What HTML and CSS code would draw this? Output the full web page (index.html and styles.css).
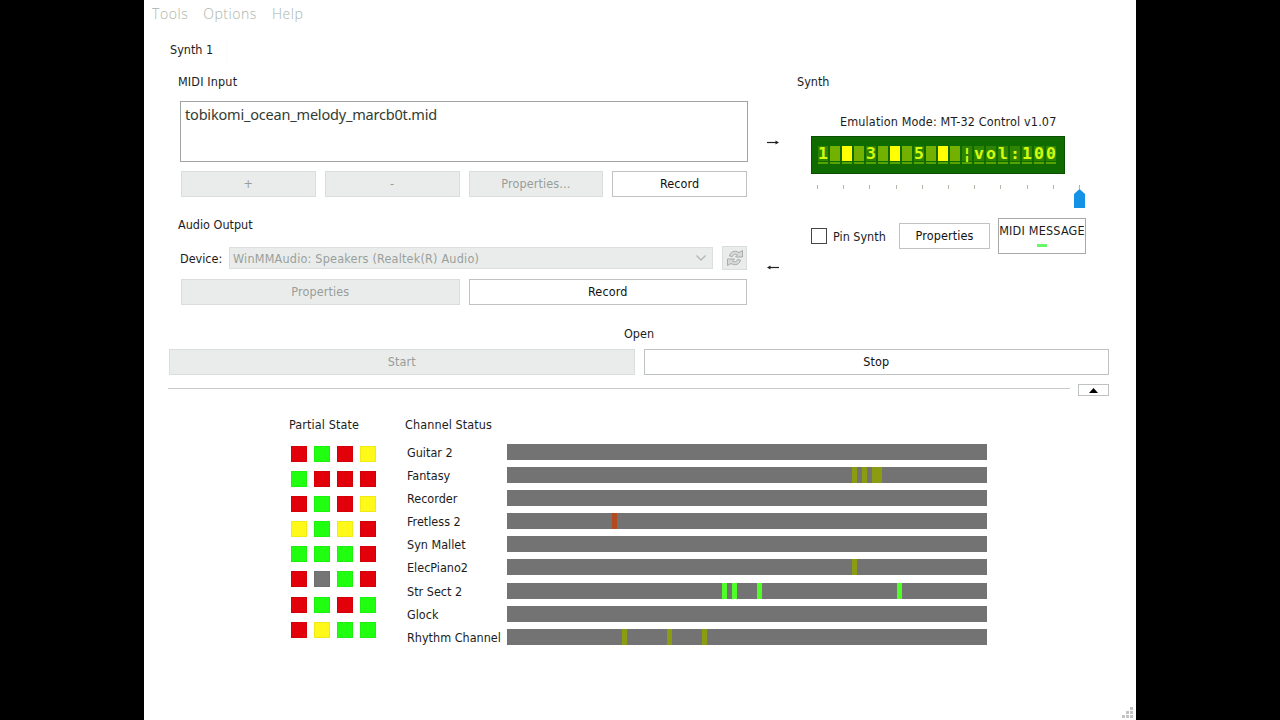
FILE: index.html
```html
<!DOCTYPE html>
<html lang="en">
<head>
  <meta charset="UTF-8" />
  <meta name="viewport" content="width=device-width, initial-scale=1.0"/>
  <title>MT-32 Synth</title>
  <link rel="stylesheet" href="styles.css">
</head>
<body>
  <div class="window">
    <div class="menubar">
      <span class="menu-tools">Tools</span>
      <span class="menu-options">Options</span>
      <span class="menu-help">Help</span>
    </div>
    <div class="tab"><span>Synth 1</span></div>

    <div class="top">
      <div class="left">
        <h2 class="midi-title">MIDI Input</h2>
        <div class="list">tobikomi_ocean_melody_marcb0t.mid</div>
        <div class="row midi-buttons">
          <button disabled>+</button>
          <button disabled>-</button>
          <button disabled>Properties...</button>
          <button>Record</button>
        </div>
        <h2 class="audio-title">Audio Output</h2>
        <div class="row device">
          <label>Device:</label>
          <div class="select">
            <span>WinMMAudio: Speakers (Realtek(R) Audio)</span>
            <svg width="10" height="6" viewBox="0 0 10 6"><path d="M0.5 0.5L5 5L9.5 0.5" fill="none" stroke="#b3b8b3" stroke-width="1.3"/></svg>
          </div>
          <button class="refresh" disabled>
            <svg width="18" height="18" viewBox="0 0 18 18" fill="#d6d9d6" stroke="#a9ada9" stroke-width="1">
              <path d="M3.500 7C4 3 8.500 0.800 13 3.500L16.500 1.500V8H9.500L11.500 6C9 4.500 7 5.500 6.500 7.500Z"/>
              <path d="M14.500 11C14 15 9.500 17.200 5 14.500L1.500 16.500V10H8.500L6.500 12C9 13.500 11 12.500 11.500 10.500Z"/>
            </svg>
          </button>
        </div>
        <div class="row audio-buttons">
          <button disabled>Properties</button>
          <button>Record</button>
        </div>
      </div>

      <div class="arrows">
        <svg width="12" height="7" viewBox="0 0 12 7"><path d="M0 3.500H9" stroke="#222" stroke-width="1.200"/><path d="M8.500 1.500L12 3.500L8.500 5.500Z" fill="#222"/></svg>
        <svg width="12" height="7" viewBox="0 0 12 7"><path d="M3 3.500H12" stroke="#222" stroke-width="1.200"/><path d="M3.500 1.500L0 3.500L3.500 5.500Z" fill="#222"/></svg>
      </div>

      <div class="right">
        <h2 class="synth-title">Synth</h2>
        <p class="mode">Emulation Mode: MT-32 Control v1.07</p>
        <div class="lcd" id="lcd"></div>
        <div class="slider">
          <div class="ticks"><i></i><i></i><i></i><i></i><i></i><i></i><i></i><i></i><i></i><i></i><i></i></div>
          <svg class="thumb" width="11" height="19" viewBox="0 0 11 19"><path d="M0 5L5.500 0L11 5V19H0Z" fill="#1492e6"/></svg>
        </div>
        <div class="synth-controls">
          <span class="checkbox"></span>
          <span class="pin">Pin Synth</span>
          <button class="props">Properties</button>
          <div class="message"><span>MIDI MESSAGE</span><i></i></div>
        </div>
      </div>
    </div>

    <p class="status">Open</p>
    <div class="row run-buttons">
      <button disabled>Start</button>
      <button>Stop</button>
    </div>
    <div class="divider">
      <hr>
      <button><svg width="9" height="5" viewBox="0 0 9 5"><path d="M4.500 0L9 5H0Z"/></svg></button>
    </div>

    <div class="monitor">
      <div class="partials">
        <h2>Partial State</h2>
        <div class="leds" id="leds"></div>
      </div>
      <div class="channels">
        <h2>Channel Status</h2>
        <div id="channels"></div>
      </div>
    </div>
    <svg class="grip" width="11" height="11" viewBox="0 0 11 11" fill="#c4c4c4"><path d="M8 0h3v3h-3zM4 4h3v3h-3zM8 4h3v3h-3zM0 8h3v3h-3zM4 8h3v3h-3zM8 8h3v3h-3z"/></svg>
  </div>

  <script>
    // # is a lit block, a space is an idle one
    const lcd = document.getElementById("lcd");
    for (const c of "1 # 3 # 5 # |vol:100") {
      const cell = document.createElement("span");
      cell.className = c === "#" ? "lit" : c === " " ? "idle" : "char";
      if (cell.className === "char") cell.textContent = c === "|" ? "¦" : c;
      lcd.appendChild(cell);
    }

    const leds = document.getElementById("leds");
    for (const c of "rgrygrrrrgryygyrgggrrxgrrgrgrygg") {
      const led = document.createElement("i");
      led.className = "led " + c;
      leds.appendChild(led);
    }

    // notes: [left, width, colour]
    const channels = [
      ["Guitar 2", []],
      ["Fantasy", [[345, 5, "olive"], [355, 5, "olive"], [365, 10, "olive"]]],
      ["Recorder", []],
      ["Fretless 2", [[105, 5, "rust"]]],
      ["Syn Mallet", []],
      ["ElecPiano2", [[345, 5, "olive"]]],
      ["Str Sect 2", [[215, 5, "lime"], [225, 5, "lime"], [250, 5, "lime"], [390, 5, "lime"]]],
      ["Glock", []],
      ["Rhythm Channel", [[115, 5, "olive"], [160, 5, "olive"], [195, 5, "olive"]]]
    ];
    document.getElementById("channels").innerHTML = channels.map(([name, notes]) =>
      `<div class="channel"><span>${name}</span><div class="bar">${notes.map(([x, w, c]) =>
        `<i class="${c}" style="left:${x}px;width:${w}px"></i>`).join("")}</div></div>`).join("");
  </script>
</body>
</html>
```
FILE: styles.css
```css
* {
  box-sizing: border-box;
}

body {
  margin: 0;
  height: 720px;
  background: #000;
  overflow: hidden;
  font-family: "DejaVu Sans Condensed", "DejaVu Sans", sans-serif;
  font-stretch: condensed;
  font-size: 12.5px;
  color: #1c1c1c;
}

h2, p {
  margin: 0;
  font-size: inherit;
  font-weight: normal;
  line-height: 16px;
  white-space: nowrap;
}

.window {
  position: relative;
  width: 992px;
  height: 720px;
  margin: 0 auto;
  background: #fefffe;
}

.menubar {
  display: flex;
  gap: 15px;
  height: 38px;
  padding: 4px 8px;
  font: 300 14px/20px "Open Sans", sans-serif;
  letter-spacing: 0.55px;
  color: #aab4aa;
}

.tab {
  width: 83px;
  height: 26px;
  padding: 4px 0 0 26px;
  line-height: 16px;
  border-right: 1px solid #fafcf9;
}

.top {
  display: flex;
  height: 262px;
  padding-left: 34px;
}

.left {
  width: 569px;
  padding-top: 10px;
}

.midi-title {
  letter-spacing: 0.15px;
}

.list {
  width: 568px;
  height: 61px;
  margin: 11px 0 9px 2px;
  padding: 2px 4px;
  border: 1px solid #a0a4a0;
  font: 14.5px/20px "Noto Sans", sans-serif;
  letter-spacing: -0.19px;
  color: #333c33;
}

.row {
  display: flex;
  gap: 9px;
}

button {
  flex: 1;
  height: 26px;
  padding: 0 0 1px;
  border: 1px solid #bfc3bf;
  background: #fff;
  font: inherit;
  letter-spacing: 0.12px;
  color: #111;
}

button:disabled {
  background: #e9eceb;
  border-color: #d9dddb;
  color: #989d99;
}

.midi-buttons, .audio-buttons {
  width: 566px;
  margin-left: 3px;
}

.audio-title {
  margin: 20px 0 13px;
}

.device {
  align-items: center;
  width: 567px;
  margin: 0 0 9px 2px;
}

.device label {
  width: 40px;
}

.select {
  display: flex;
  flex: 1;
  align-items: center;
  justify-content: space-between;
  height: 22px;
  padding: 0 6px 0 3px;
  background: #e9eceb;
  border: 1px solid #dcdfdd;
  color: #9a9f9b;
  letter-spacing: 0.21px;
}

.device .refresh {
  display: flex;
  flex: none;
  align-items: center;
  justify-content: center;
  width: 25px;
  height: 24px;
}

.arrows {
  display: flex;
  flex-direction: column;
  gap: 118px;
  width: 50px;
  padding: 75px 0 0 20px;
}

.right {
  width: 300px;
  padding-top: 10px;
}

.mode {
  margin: 24px 0 6px 43px;
  letter-spacing: 0.14px;
}

.lcd {
  display: flex;
  gap: 2px;
  width: 254px;
  height: 38px;
  margin-left: 14px;
  padding: 9px 6px;
  background: #0f6a00;
  border: 1px solid #084f00;
}

.lcd span {
  position: relative;
  width: 10px;
  height: 15px;
  background: #2f8500;
  color: #d2ff10;
  font: bold 16.5px/15px "DejaVu Sans Mono", monospace;
  text-align: center;
}

.lcd span::after {
  content: "";
  position: absolute;
  left: 0;
  top: 16px;
  width: 10px;
  height: 2px;
  background: #57a400;
}

.lcd .idle {
  background: #73b100;
}

.lcd .lit {
  background: #ffff00;
}

.slider {
  height: 44px;
  padding: 11px 0 0 20px;
}

.ticks {
  display: flex;
  justify-content: space-between;
  width: 263px;
}

.ticks i {
  width: 1px;
  height: 4px;
  background: #b5b5a9;
}

.thumb {
  display: block;
  margin-left: 257px;
}

.synth-controls {
  display: flex;
  align-items: center;
  height: 36px;
  margin-left: 14px;
  white-space: nowrap;
}

.checkbox {
  width: 16px;
  height: 16px;
  border: 1px solid #444;
}

.pin {
  width: 58px;
  margin-left: 6px;
}

.synth-controls .props {
  flex: none;
  width: 91px;
  margin: 0 8px;
}

.message {
  display: flex;
  flex-direction: column;
  align-items: center;
  width: 88px;
  height: 36px;
  padding-top: 4px;
  border: 1px solid #a8a8a8;
  line-height: 16px;
  letter-spacing: 0.2px;
}

.message i {
  width: 10px;
  height: 3px;
  margin-top: 5px;
  background: #66f766;
}

.status {
  padding-left: 480px;
}

.run-buttons {
  width: 940px;
  margin: 7px 0 0 25px;
}

.divider {
  display: flex;
  gap: 8px;
  width: 941px;
  height: 12px;
  margin: 9px 0 0 24px;
}

.divider hr {
  flex: 1;
  height: 1px;
  margin: 4px 0 0;
  border: 0;
  background: #c9c9c9;
}

.divider button {
  display: flex;
  flex: none;
  align-items: center;
  justify-content: center;
  width: 31px;
  height: 12px;
  padding: 1px 0 0;
}

.monitor {
  display: flex;
  padding: 21px 0 0 145px;
}

.monitor h2 {
  letter-spacing: 0.1px;
}

.partials {
  width: 116px;
}

.leds {
  display: grid;
  grid-template-columns: repeat(4, 16px);
  column-gap: 7px;
  row-gap: 9.1px;
  margin: 13px 0 0 2px;
}

.led {
  height: 16px;
  border: 1px solid rgba(0, 0, 0, 0.06);
}

.r {
  background: #e2000a;
}

.g {
  background: #20ff10;
}

.y {
  background: #fff91a;
}

.x {
  background: #757575;
}

#channels {
  margin: 11px 0 0 2px;
}

.channel {
  display: flex;
  height: 23.1px;
  line-height: 18px;
  white-space: nowrap;
}

.channel span {
  width: 100px;
}

.bar {
  position: relative;
  width: 480px;
  height: 16px;
  background: #737373;
}

.bar i {
  position: absolute;
  top: 0;
  height: 16px;
}

.olive {
  background: #8b9c12;
}

.rust {
  background: #b44a20;
}

.lime {
  background: #50ff28;
}

.grip {
  position: absolute;
  right: 3px;
  bottom: 2px;
}
```
